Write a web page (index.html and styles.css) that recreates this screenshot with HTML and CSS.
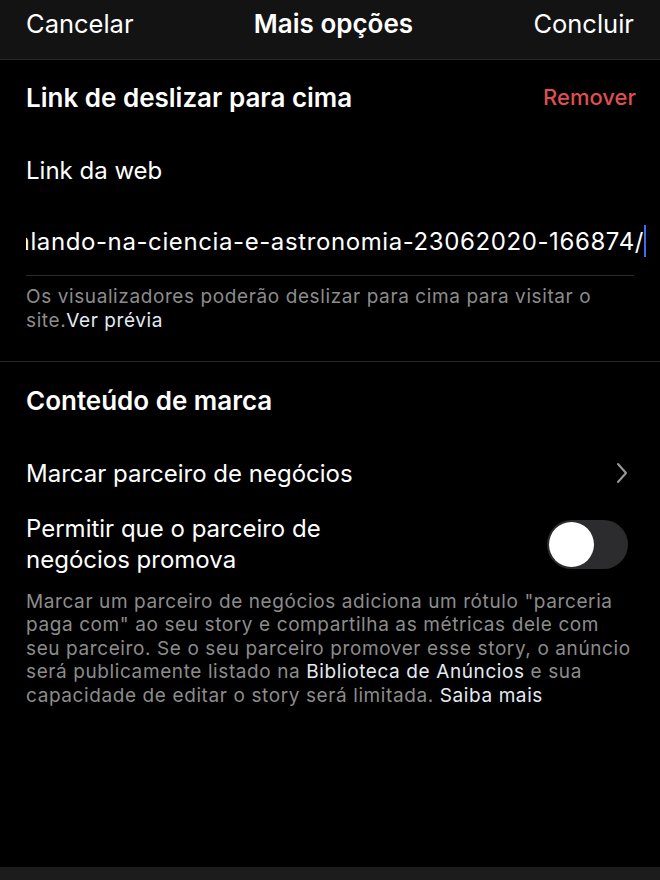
FILE: index.html
```html
<!DOCTYPE html>
<html lang="pt-BR">
<head>
    <meta charset="UTF-8">
    <meta name="viewport" content="width=device-width, initial-scale=1.0">
    <title>Mais opções</title>
    <link rel="stylesheet" href="styles.css">
</head>
<body>
    <div class="topbar">
        <span class="top-btn">Cancelar</span>
        <span class="top-title">Mais opções</span>
        <span class="top-btn">Concluir</span>
    </div>

    <div class="section">
        <div class="section-head">
            <h2>Link de deslizar para cima</h2>
            <span class="remove">Remover</span>
        </div>
        <div class="label">Link da web</div>
        <div class="url-field">
            <span class="url-text">https://www.exemplo.com.br/falando-na-ciencia-e-astronomia-23062020-166874/</span><span class="caret"></span>
        </div>
        <p class="hint">Os visualizadores poderão deslizar para cima para visitar o site.<span class="link">Ver prévia</span></p>
    </div>

    <div class="section branded">
        <h2>Conteúdo de marca</h2>
        <div class="row">
            <span>Marcar parceiro de negócios</span>
            <svg class="chevron" width="12" height="22" viewBox="0 0 12 22">
                <path d="M2 2 L10 11 L2 20" fill="none" stroke="#9a9a9a" stroke-width="2" stroke-linecap="round" stroke-linejoin="round"/>
            </svg>
        </div>
        <div class="row toggle-row">
            <span class="toggle-label">Permitir que o parceiro de negócios promova</span>
            <div class="toggle"><div class="knob"></div></div>
        </div>
        <p class="hint desc">Marcar um parceiro de negócios adiciona um rótulo "parceria paga com" ao seu story e compartilha as métricas dele com seu parceiro. Se o seu parceiro promover esse story, o anúncio será publicamente listado na <span class="link">Biblioteca de Anúncios</span> e sua capacidade de editar o story será limitada. <span class="link">Saiba mais</span></p>
    </div>

    <div class="bottom-bar"></div>
</body>
</html>
```

FILE: styles.css
```css
html, body {
    margin: 0;
    height: 100%;
    background: #000;
}

body {
    font-family: Inter, "Noto Sans", sans-serif;
    color: #fff;
    display: flex;
    flex-direction: column;
}

.topbar {
    height: 60px;
    background: #131313;
    border-bottom: 1px solid #262626;
    display: flex;
    align-items: center;
    justify-content: space-between;
    padding: 0 26px 12px;
    font-size: 25.5px;
    box-sizing: border-box;
    flex-shrink: 0;
}

.top-title {
    font-size: 26px;
    font-weight: 600;
}

.section {
    padding: 0 26px;
}

.section h2 {
    font-size: 26px;
    font-weight: 600;
    margin: 0;
}

.section-head {
    display: flex;
    justify-content: space-between;
    align-items: center;
    height: 74px;
    padding-bottom: 1px;
}

.remove {
    color: #de4f52;
    font-size: 22px;
    font-weight: 500;
    margin-right: -2px;
}

.label {
    font-size: 24px;
    height: 72px;
    line-height: 72px;
}

.url-field {
    display: flex;
    justify-content: flex-end;
    align-items: center;
    height: 68px;
    margin-right: -12px;
    overflow: hidden;
    white-space: nowrap;
    font-size: 24px;
    letter-spacing: 0.6px;
}

.caret {
    display: inline-block;
    width: 2px;
    height: 32px;
    background: #3b6df2;
    flex-shrink: 0;
}

.url-text {
    flex-shrink: 0;
}

.hint {
    margin: 0;
    border-top: 1px solid #2a2a2a;
    padding: 9px 0 0;
    font-size: 19px;
    letter-spacing: 0.6px;
    line-height: 24px;
    color: #8c8c8c;
    height: 76px;
}

.link {
    color: #e4ebf3;
}

.branded {
    border-top: 1px solid #262626;
}

.branded h2 {
    height: 78px;
    line-height: 78px;
}

.row {
    display: flex;
    justify-content: space-between;
    align-items: center;
    font-size: 24px;
    height: 66px;
}

.chevron {
    margin-right: 6px;
}

.toggle-row {
    height: 76px;
}

.toggle-label {
    width: 340px;
    line-height: 31px;
}

.toggle {
    width: 81px;
    height: 49px;
    border-radius: 25px;
    background: #2c2c2e;
    margin-right: 6px;
    position: relative;
}

.knob {
    position: absolute;
    left: 2px;
    top: 2px;
    width: 45px;
    height: 45px;
    border-radius: 50%;
    background: #fff;
}

.desc {
    border-top: none;
    padding-top: 8px;
    line-height: 23.4px;
    height: auto;
}

.bottom-bar {
    margin-top: auto;
    height: 13px;
    background: #1c1c1c;
    flex-shrink: 0;
}
```
